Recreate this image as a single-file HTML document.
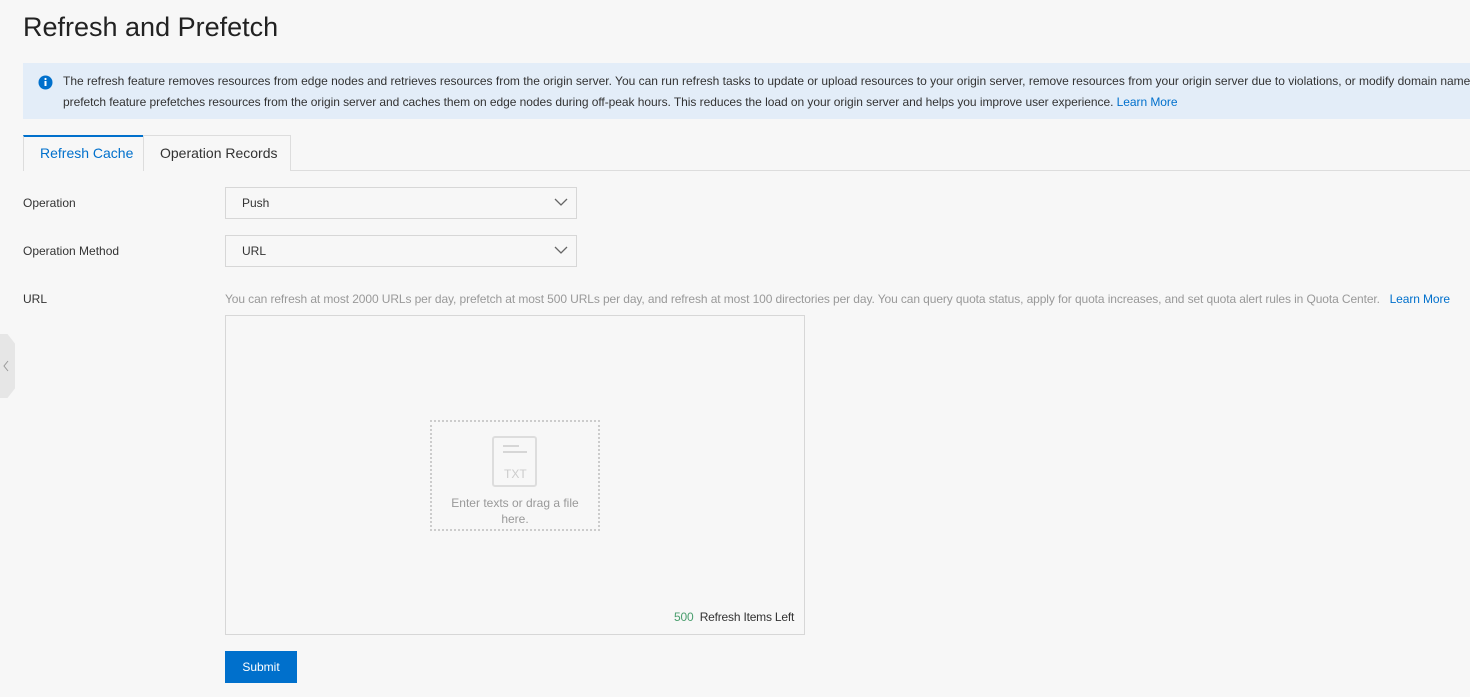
<!DOCTYPE html>
<html><head><meta charset="utf-8"><style>
body{margin:0;width:1470px;height:697px;background:#f7f7f7;font-family:"Segoe UI","Liberation Sans",sans-serif;color:#333;overflow:hidden;position:relative;font-size:12px}
.a{position:absolute;white-space:nowrap}
h1{position:absolute;left:23px;top:12px;margin:0;font-weight:400;font-size:27px;color:#222}
.notice{position:absolute;left:23px;top:63px;width:1460px;height:56px;background:#e3edf8}
.sel{position:absolute;left:225px;width:350px;height:30px;border:1px solid #d7d7d7;background:#f7f7f7}
.sel span{position:absolute;left:16px;top:8px}
.sel svg{position:absolute;right:8px;top:9px}
</style></head><body>
<h1>Refresh and Prefetch</h1>
<div class="notice"></div>
<svg class="a" style="left:38px;top:75px" width="15" height="15"><circle cx="7.5" cy="7.5" r="7" fill="#0070cc"/><rect x="6.5" y="6" width="2" height="5" fill="#fff"/><circle cx="7.5" cy="4" r="1.1" fill="#fff"/></svg>
<div class="a" style="left:63px;top:74px;font-size:12px;color:#333">The refresh feature removes resources from edge nodes and retrieves resources from the origin server. You can run refresh tasks to update or upload resources to your origin server, remove resources from your origin server due to violations, or modify domain name c</div>
<div class="a" style="left:63px;top:95px;font-size:12px;color:#333;letter-spacing:-0.05px">prefetch feature prefetches resources from the origin server and caches them on edge nodes during off-peak hours. This reduces the load on your origin server and helps you improve user experience. <span style="color:#0070cc">Learn More</span></div>
<div class="a" style="left:23px;top:170px;width:1447px;height:1px;background:#ddd"></div>
<div class="a" style="left:23px;top:135px;width:120px;background:#f7f7f7;border-top:2px solid #0070cc;border-left:1px solid #ddd;box-sizing:border-box;height:36px"></div>
<div class="a" style="left:40px;top:145px;font-size:14px;color:#0070cc">Refresh Cache</div>
<div class="a" style="left:143px;top:135px;width:148px;border:1px solid #ddd;border-bottom:none;box-sizing:border-box;height:36px;background:#f7f7f7"></div>
<div class="a" style="left:160px;top:145px;font-size:14px;color:#333">Operation Records</div>
<div class="a" style="left:23px;top:196px">Operation</div>
<div class="sel" style="top:187px"><span>Push</span><svg width="14" height="10"><path d="M1 2l6 6 6-6" stroke="#666" stroke-width="1.3" fill="none"/></svg></div>
<div class="a" style="left:23px;top:244px">Operation Method</div>
<div class="sel" style="top:235px"><span>URL</span><svg width="14" height="10"><path d="M1 2l6 6 6-6" stroke="#666" stroke-width="1.3" fill="none"/></svg></div>
<div class="a" style="left:23px;top:292px">URL</div>
<div class="a" style="left:225px;top:292px;color:#999;letter-spacing:-0.1px">You can refresh at most 2000 URLs per day, prefetch at most 500 URLs per day, and refresh at most 100 directories per day. You can query quota status, apply for quota increases, and set quota alert rules in Quota Center. &nbsp;&nbsp;<span style="color:#0070cc">Learn More</span></div>
<div class="a" style="left:225px;top:315px;width:578px;height:318px;border:1px solid #d7d7d7"></div>
<div class="a" style="left:430px;top:420px;width:166px;height:107px;border:2px dotted #ccc"></div>
<svg class="a" style="left:492px;top:436px" width="46" height="52"><rect x="1" y="1" width="43" height="49" rx="2" fill="none" stroke="#ddd" stroke-width="2"/><path d="M11 10h16M11 16h24" stroke="#ccc" stroke-width="1.5"/><text x="12" y="42" font-size="12" fill="#ccc" font-family="Liberation Sans">TXT</text></svg>
<div class="a" style="left:447px;top:495px;width:136px;text-align:center;color:#999;white-space:normal;line-height:16px">Enter texts or drag a file here.</div>
<div class="a" style="left:674px;top:610px;letter-spacing:-0.2px"><span style="color:#4a9e6e">500</span>&nbsp; Refresh Items Left</div>
<div class="a" style="left:225px;top:651px;width:72px;height:32px;background:#0070cc;color:#fff;text-align:center;line-height:32px">Submit</div>
<div class="a" style="left:0;top:334px;width:15px;height:64px;background:#e6e6e6;clip-path:polygon(0 0,50% 0,100% 15%,100% 85%,50% 100%,0 100%)"></div>
<svg class="a" style="left:2px;top:360px" width="8" height="12"><path d="M6 1L2 6l4 5" stroke="#999" fill="none"/></svg>
</body></html>
